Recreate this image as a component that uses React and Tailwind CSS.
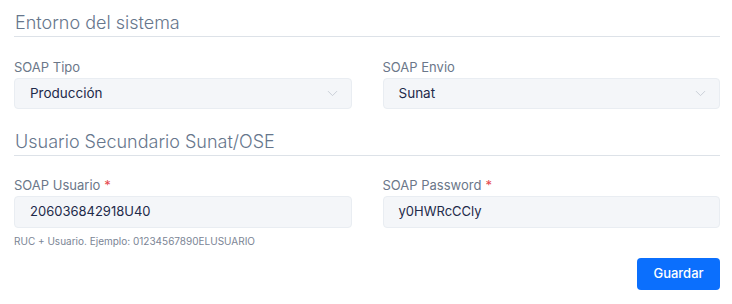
import { ChevronDown } from 'lucide-react'

function Field({ label, required, children, help }) {
  return (
    <div className="flex flex-col">
      <label className="text-[13px] leading-[20px] text-[#6b7789] mb-[1px]">
        {label}
        {required && <span className="text-[#e5484d] ml-1">*</span>}
      </label>
      {children}
      {help && <p className="text-[10px] leading-[14px] text-[#7b8595] mt-[6px]">{help}</p>}
    </div>
  )
}

function SelectBox({ value }) {
  return (
    <div className="h-[31px] rounded-[4px] bg-[#f4f6f9] border border-[#e9edf2] flex items-center justify-between pl-[15px] pr-[10px]">
      <span className="text-[13.5px] text-[#1e2a4a]">{value}</span>
      <ChevronDown className="w-[17px] h-[17px] text-[#c3c9d2]" strokeWidth={1.2} />
    </div>
  )
}

function InputBox({ value }) {
  return (
    <div className="h-[32px] rounded-[4px] bg-[#f4f6f9] border border-[#e9edf2] flex items-center pl-[15px]">
      <span className="text-[13px] text-[#1e2a4a]">{value}</span>
    </div>
  )
}

export default function App() {
  return (
    <div className="w-[732px] h-[304px] bg-white pl-[14px] pr-[12px]" style={{ fontFamily: 'Inter, "Noto Sans", sans-serif' }}>
      <div className="pt-[9px] border-b border-[#dde2e8]">
        <h2 className="text-[18px] leading-[27px] font-light text-[#66768c] pl-[1px]">Entorno del sistema</h2>
      </div>
      <div className="grid grid-cols-2 gap-x-[31px] mt-[20px]">
        <Field label="SOAP Tipo">
          <SelectBox value="Producción" />
        </Field>
        <Field label="SOAP Envio">
          <SelectBox value="Sunat" />
        </Field>
      </div>
      <div className="mt-[19px] border-b border-[#dde2e8]">
        <h2 className="text-[18px] leading-[27px] font-light text-[#66768c] pl-[1px]">Usuario Secundario Sunat/OSE</h2>
      </div>
      <div className="grid grid-cols-2 gap-x-[31px] mt-[19px]">
        <Field label="SOAP Usuario" required help="RUC + Usuario. Ejemplo: 01234567890ELUSUARIO">
          <InputBox value="206036842918U40" />
        </Field>
        <Field label="SOAP Password" required>
          <InputBox value="y0HWRcCCly" />
        </Field>
      </div>
      <div className="flex justify-end mt-[10px]">
        <button className="h-[32px] w-[83px] rounded-[4px] bg-[#0b6ffd] text-white text-[13px] font-medium">Guardar</button>
      </div>
    </div>
  )
}
